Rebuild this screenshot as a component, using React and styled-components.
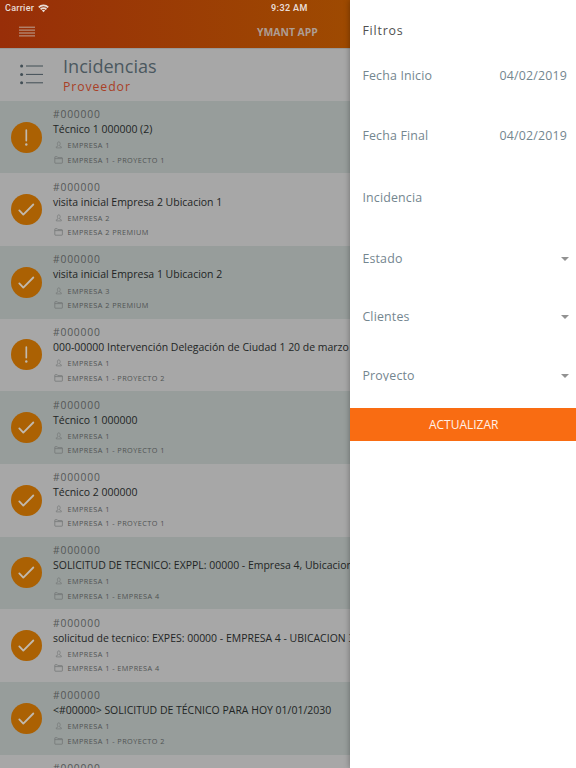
import React from "react";
import styled, { createGlobalStyle } from "styled-components";

const GlobalStyle = createGlobalStyle`
  * {
    box-sizing: border-box;
  }

  body {
    margin: 0;
    overflow: hidden;
    font-family: "Open Sans", "Noto Sans", sans-serif;
  }
`;

const Layout = styled.div`
  display: flex;
  width: 576px;
  height: 768px;
  overflow: hidden;
  background: #fff;
`;

const Main = styled.main`
  display: flex;
  flex-direction: column;
  width: 350.4px;
  flex: none;
  overflow: hidden;
  background: #a7a7a7;
`;

const TopBar = styled.header`
  height: 48px;
  flex: none;
  background: linear-gradient(90deg, #982e08 0%, #9e4a01 100%);
`;

const StatusBar = styled.div`
  display: grid;
  grid-template-columns: 266px 1fr;
  height: 16px;
  padding-left: 5px;
  font-family: Roboto, sans-serif;
  font-size: 9px;
  line-height: 16px;
  color: #e9dcd6;
  white-space: nowrap;

  .carrier {
    display: flex;
    align-items: center;
    gap: 4px;
    font-weight: 500;
    letter-spacing: 0.25px;
  }

  .time {
    font-weight: 600;
    letter-spacing: 0.4px;
  }
`;

const NavBar = styled.div`
  display: grid;
  grid-template-columns: 238px 1fr;
  align-items: center;
  height: 31px;
  padding-left: 19px;
`;

const NavTitle = styled.div`
  font-size: 10.4px;
  font-weight: 700;
  color: #ad9d93;
  white-space: nowrap;
`;

const PageHead = styled.div`
  display: flex;
  height: 52.7px;
  flex: none;
  padding: 6px 0 0 20px;
  border-top: 1px solid #989898;

  svg {
    margin-top: 9px;
  }
`;

const HeadText = styled.div`
  margin-left: 20px;

  h1 {
    margin: 0;
    font-size: 18.1px;
    font-weight: 400;
    line-height: 22px;
    color: #4b585f;
  }

  p {
    margin: 2px 0 0;
    font-size: 12.3px;
    line-height: 15px;
    letter-spacing: 0.9px;
    color: #a94026;
  }
`;

const Row = styled.article`
  display: flex;
  align-items: center;
  height: 72.67px;
  flex: none;
  padding-left: 11px;
  background: ${({ $striped }) => ($striped ? "#979d9b" : "#a7a7a7")};
`;

const Badge = styled.div`
  width: 31px;
  height: 31px;
  flex: none;
  border-radius: 50%;
  background: #ab6103;

  svg {
    display: block;
  }
`;

const RowText = styled.div`
  align-self: flex-start;
  padding-top: 6.3px;
  margin-left: 11px;
  white-space: nowrap;
`;

const Code = styled.div`
  font-size: 10.3px;
  line-height: 15px;
  letter-spacing: 0.8px;
  color: #545757;
`;

const Subject = styled.div`
  margin-bottom: 1px;
  font-size: 10.48px;
  line-height: 15px;
  color: #222525;
`;

const Meta = styled.div`
  display: flex;
  align-items: center;
  gap: 4.5px;
  height: 14.5px;
  padding-left: 1px;
  font-size: 7.3px;
  letter-spacing: 0.45px;
  color: #505353;
`;

const Drawer = styled.aside`
  position: relative;
  flex: 1;
  background: #fff;
  box-shadow: 0 0 6px rgba(0, 0, 0, 0.35);
`;

const DrawerTitle = styled.h2`
  margin: 0;
  padding: 21px 0 0 12px;
  font-size: 12.4px;
  font-weight: 400;
  line-height: 20px;
  letter-spacing: 0.8px;
  color: #505050;
`;

const Field = styled.div`
  display: flex;
  justify-content: space-between;
  align-items: center;
  height: 20px;
  margin-top: ${({ $gap }) => $gap}px;
  padding: 0 ${({ $select }) => ($select ? 7 : 9)}px 0 12px;
  font-size: 12.4px;
  line-height: 20px;
  letter-spacing: 0.17px;
  color: #74868f;
`;

const Arrow = styled.span`
  border: 4px solid transparent;
  border-top-color: #929292;
  border-bottom: 0;
`;

const ClippedLabel = styled.span`
  height: ${({ $clip }) => ($clip ? "15.5px" : "20px")};
  overflow: hidden;
  align-self: flex-start;
`;

const UpdateButton = styled.button`
  display: block;
  width: 100%;
  height: 33px;
  margin-top: 22px;
  padding: 0 0 0 1px;
  border: 0;
  background: #f96c12;
  font-family: inherit;
  font-size: 12px;
  color: #fff1e8;
`;

const incidents = [
  { title: "Técnico 1 000000 (2)", company: "EMPRESA 1", project: "EMPRESA 1 - PROYECTO 1", alert: true },
  { title: "visita inicial Empresa 2 Ubicacion 1", company: "EMPRESA 2", project: "EMPRESA 2 PREMIUM" },
  { title: "visita inicial Empresa 1 Ubicacion 2", company: "EMPRESA 3", project: "EMPRESA 2 PREMIUM" },
  { title: "000-00000 Intervención Delegación de Ciudad 1 20 de marzo", company: "EMPRESA 1", project: "EMPRESA 1 - PROYECTO 2", alert: true },
  { title: "Técnico 1 000000", company: "EMPRESA 1", project: "EMPRESA 1 - PROYECTO 1" },
  { title: "Técnico 2 000000", company: "EMPRESA 1", project: "EMPRESA 1 - PROYECTO 1" },
  { title: "SOLICITUD DE TECNICO: EXPPL: 00000 - Empresa 4, Ubicacion", company: "EMPRESA 1", project: "EMPRESA 1 - EMPRESA 4" },
  { title: "solicitud de tecnico: EXPES: 00000 - EMPRESA 4 - UBICACION 3", company: "EMPRESA 1", project: "EMPRESA 1 - EMPRESA 4" },
  { title: "<#00000> SOLICITUD DE TÉCNICO PARA HOY 01/01/2030", company: "EMPRESA 1", project: "EMPRESA 1 - PROYECTO 2" },
  // only the code of this one reaches into the viewport
  {},
];

const fields = [
  { label: "Fecha Inicio", value: "04/02/2019", gap: 25 },
  { label: "Fecha Final", value: "04/02/2019", gap: 40 },
  { label: "Incidencia", gap: 42 },
  { label: "Estado", select: true, gap: 40.5 },
  { label: "Clientes", select: true, gap: 38.5 },
  { label: "Proyecto", select: true, clip: true, gap: 38.5 },
];

const WifiIcon = () => (
  <svg width="11" height="9" viewBox="0 0 11 9" fill="none" stroke="#e9dcd6" strokeWidth="1.8">
    <path d="M0.8 3.3a6.7 6.7 0 0 1 9.4 0" />
    <path d="M2.6 5.3a4.1 4.1 0 0 1 5.8 0" />
    <path d="M3.8 6.5a2.5 2.5 0 0 1 3.4 0L5.5 8.3z" fill="#e9dcd6" stroke="none" />
  </svg>
);

const MenuIcon = () => (
  <svg width="16" height="11" viewBox="0 0 16 11" stroke="#bda497">
    <path d="M0 1.2h16M0 4.1h16M0 7h16M0 9.9h16" strokeWidth="1" />
  </svg>
);

const ListIcon = () => (
  <svg width="23" height="21" viewBox="0 0 23 21" fill="#414e55" stroke="#414e55">
    <path d="M6 2h17M6 10.4h17M6 18.8h17" strokeWidth="1" />
    <g stroke="none">
      <circle cx="1.6" cy="2" r="1.5" />
      <circle cx="1.6" cy="10.4" r="1.5" />
      <circle cx="1.6" cy="18.8" r="1.5" />
    </g>
  </svg>
);

const StatusIcon = ({ alert }) => (
  <svg width="31" height="31" viewBox="0 0 31 31" fill="none" stroke="#c1b9ae" strokeLinecap="round">
    {alert ? (
      <>
        <path d="M15.3 8v10.6" strokeWidth="1.7" />
        <circle cx="15.3" cy="22.5" r="1.2" fill="#c1b9ae" stroke="none" />
      </>
    ) : (
      <path d="M8.3 16.4l4 4.2L22.3 10.5" strokeWidth="1.8" strokeLinejoin="round" />
    )}
  </svg>
);

const UserIcon = () => (
  <svg width="9" height="8" viewBox="0 0 9 8" fill="none" stroke="#747777" strokeWidth="0.65">
    <path d="M4 4.2C3 3.3 3.2 0.8 4.8 0.8s1.8 2.5.8 3.4v.8l1.7.8v1.1h-5V5.8L4 5z" />
  </svg>
);

const FolderIcon = () => (
  <svg width="9" height="8" viewBox="0 0 9 8" fill="none" stroke="#707373" strokeWidth="0.7">
    <path d="M.8 1.3q0-.6.6-.6h1.8l.7.9h3.9q.6 0 .6.6v4.4q0 .6-.6.6H1.4q-.6 0-.6-.6zM.8 2.6h7.6" />
  </svg>
);

const Incident = ({ item, striped }) => {
  return (
    <Row $striped={striped}>
      <Badge>
        <StatusIcon alert={item.alert} />
      </Badge>
      <RowText>
        <Code>#000000</Code>
        {item.title ? (
          <>
            <Subject>{item.title}</Subject>
            <Meta>
              <UserIcon />
              {item.company}
            </Meta>
            <Meta>
              <FolderIcon />
              {item.project}
            </Meta>
          </>
        ) : null}
      </RowText>
    </Row>
  );
};

const App = () => {
  return (
    <Layout>
      <GlobalStyle />
      <Main>
        <TopBar>
          <StatusBar>
            <div className="carrier">
              Carrier
              <WifiIcon />
            </div>
            <div className="time">9:32 AM</div>
          </StatusBar>
          <NavBar>
            <MenuIcon />
            <NavTitle>YMANT APP</NavTitle>
          </NavBar>
        </TopBar>
        <PageHead>
          <ListIcon />
          <HeadText>
            <h1>Incidencias</h1>
            <p>Proveedor</p>
          </HeadText>
        </PageHead>
        {incidents.map((v, i) => (
          <Incident key={i} item={v} striped={i % 2 === 0} />
        ))}
      </Main>
      <Drawer>
        <DrawerTitle>Filtros</DrawerTitle>
        {fields.map((v) => (
          <Field key={v.label} $gap={v.gap} $select={v.select}>
            <ClippedLabel $clip={v.clip}>{v.label}</ClippedLabel>
            {v.select ? <Arrow /> : <span>{v.value}</span>}
          </Field>
        ))}
        <UpdateButton>ACTUALIZAR</UpdateButton>
      </Drawer>
    </Layout>
  );
};

export default App;
